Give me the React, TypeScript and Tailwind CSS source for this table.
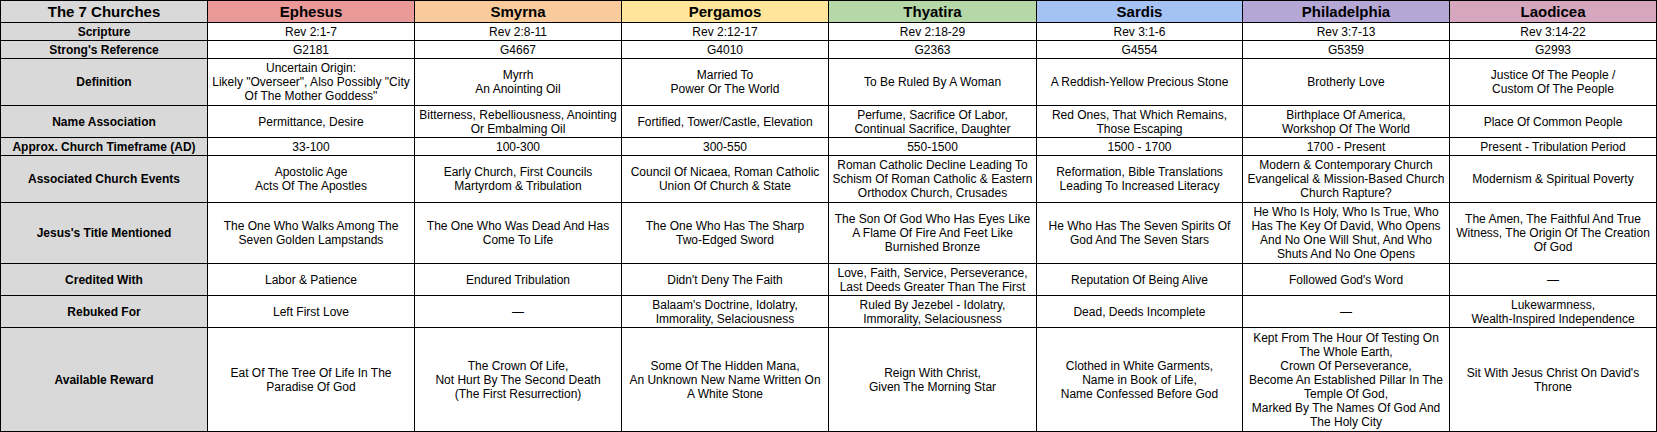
import React from "react";

type Church = {
  name: string;
  headBg: string;
  cells: string[][];
};

const ROW_LABELS = [
  "Scripture",
  "Strong's Reference",
  "Definition",
  "Name Association",
  "Approx. Church Timeframe (AD)",
  "Associated Church Events",
  "Jesus's Title Mentioned",
  "Credited With",
  "Rebuked For",
  "Available Reward",
];

const CHURCHES: Church[] = [
  {
    name: "Ephesus",
    headBg: "bg-[#ea9999]",
    cells: [
      ["Rev 2:1-7"],
      ["G2181"],
      ["Uncertain Origin:", "Likely \"Overseer\", Also Possibly \"City", "Of The Mother Goddess\""],
      ["Permittance, Desire"],
      ["33-100"],
      ["Apostolic Age", "Acts Of The Apostles"],
      ["The One Who Walks Among The", "Seven Golden Lampstands"],
      ["Labor & Patience"],
      ["Left First Love"],
      ["Eat Of The Tree Of Life In The", "Paradise Of God"],
    ],
  },
  {
    name: "Smyrna",
    headBg: "bg-[#f9cb9c]",
    cells: [
      ["Rev 2:8-11"],
      ["G4667"],
      ["Myrrh", "An Anointing Oil"],
      ["Bitterness, Rebelliousness, Anointing", "Or Embalming Oil"],
      ["100-300"],
      ["Early Church, First Councils", "Martyrdom & Tribulation"],
      ["The One Who Was Dead And Has", "Come To Life"],
      ["Endured Tribulation"],
      ["—"],
      ["The Crown Of Life,", "Not Hurt By The Second Death", "(The First Resurrection)"],
    ],
  },
  {
    name: "Pergamos",
    headBg: "bg-[#ffe599]",
    cells: [
      ["Rev 2:12-17"],
      ["G4010"],
      ["Married To", "Power Or The World"],
      ["Fortified, Tower/Castle, Elevation"],
      ["300-550"],
      ["Council Of Nicaea, Roman Catholic", "Union Of Church & State"],
      ["The One Who Has The Sharp", "Two-Edged Sword"],
      ["Didn't Deny The Faith"],
      ["Balaam's Doctrine, Idolatry,", "Immorality, Selaciousness"],
      ["Some Of The Hidden Mana,", "An Unknown New Name Written On", "A White Stone"],
    ],
  },
  {
    name: "Thyatira",
    headBg: "bg-[#b6d7a8]",
    cells: [
      ["Rev 2:18-29"],
      ["G2363"],
      ["To Be Ruled By A Woman"],
      ["Perfume, Sacrifice Of Labor,", "Continual Sacrifice, Daughter"],
      ["550-1500"],
      ["Roman Catholic Decline Leading To", "Schism Of Roman Catholic & Eastern", "Orthodox Church, Crusades"],
      ["The Son Of God Who Has Eyes Like", "A Flame Of Fire And Feet Like", "Burnished Bronze"],
      ["Love, Faith, Service, Perseverance,", "Last Deeds Greater Than The First"],
      ["Ruled By Jezebel - Idolatry,", "Immorality, Selaciousness"],
      ["Reign With Christ,", "Given The Morning Star"],
    ],
  },
  {
    name: "Sardis",
    headBg: "bg-[#a4c2f4]",
    cells: [
      ["Rev 3:1-6"],
      ["G4554"],
      ["A Reddish-Yellow Precious Stone"],
      ["Red Ones, That Which Remains,", "Those Escaping"],
      ["1500 - 1700"],
      ["Reformation, Bible Translations", "Leading To Increased Literacy"],
      ["He Who Has The Seven Spirits Of", "God And The Seven Stars"],
      ["Reputation Of Being Alive"],
      ["Dead, Deeds Incomplete"],
      ["Clothed in White Garments,", "Name in Book of Life,", "Name Confessed Before God"],
    ],
  },
  {
    name: "Philadelphia",
    headBg: "bg-[#b4a7d6]",
    cells: [
      ["Rev 3:7-13"],
      ["G5359"],
      ["Brotherly Love"],
      ["Birthplace Of America,", "Workshop Of The World"],
      ["1700 - Present"],
      ["Modern & Contemporary Church", "Evangelical & Mission-Based Church", "Church Rapture?"],
      [
        "He Who Is Holy, Who Is True, Who",
        "Has The Key Of David, Who Opens",
        "And No One Will Shut, And Who",
        "Shuts And No One Opens",
      ],
      ["Followed God's Word"],
      ["—"],
      [
        "Kept From The Hour Of Testing On",
        "The Whole Earth,",
        "Crown Of Perseverance,",
        "Become An Established Pillar In The",
        "Temple Of God,",
        "Marked By The Names Of God And",
        "The Holy City",
      ],
    ],
  },
  {
    name: "Laodicea",
    headBg: "bg-[#d5a6bd]",
    cells: [
      ["Rev 3:14-22"],
      ["G2993"],
      ["Justice Of The People /", "Custom Of The People"],
      ["Place Of Common People"],
      ["Present - Tribulation Period"],
      ["Modernism & Spiritual Poverty"],
      ["The Amen, The Faithful And True", "Witness, The Origin Of The Creation", "Of God"],
      ["—"],
      ["Lukewarmness,", "Wealth-Inspired Independence"],
      ["Sit With Jesus Christ On David's", "Throne"],
    ],
  },
];

const cellBase =
  "flex flex-col items-center justify-center text-center border-r border-b border-black overflow-visible whitespace-nowrap";

const Lines = ({ lines }: { lines: string[] }) => (
  <>
    {lines.map((l, i) => (
      <span key={i} className="block">
        {l}
      </span>
    ))}
  </>
);

export default function App() {
  return (
    <div className="w-[1657px] h-[432px] bg-white font-['Liberation_Sans',Arial,sans-serif] text-black">
      <div className="grid grid-cols-[207px_207px_207px_207px_208px_206px_207px_207px] grid-rows-[22px_18px_18px_47px_32px_18px_47px_61px_32px_32px_104px] border-t border-l border-black">
        {/* header row */}
        <div className={`${cellBase} bg-[#d9d9d9] text-[15px] font-bold leading-[18px]`}>
          The 7 Churches
        </div>
        {CHURCHES.map((c) => (
          <div
            key={c.name}
            className={`${cellBase} ${c.headBg} text-[15px] font-bold leading-[18px]`}
          >
            {c.name}
          </div>
        ))}

        {/* body rows */}
        {ROW_LABELS.map((label, r) => (
          <React.Fragment key={label}>
            <div className={`${cellBase} bg-[#d9d9d9] text-[12px] font-bold leading-[14px]`}>
              {label}
            </div>
            {CHURCHES.map((c) => (
              <div key={c.name} className={`${cellBase} text-[12px] leading-[14px]`}>
                <Lines lines={c.cells[r]} />
              </div>
            ))}
          </React.Fragment>
        ))}
      </div>
    </div>
  );
}
